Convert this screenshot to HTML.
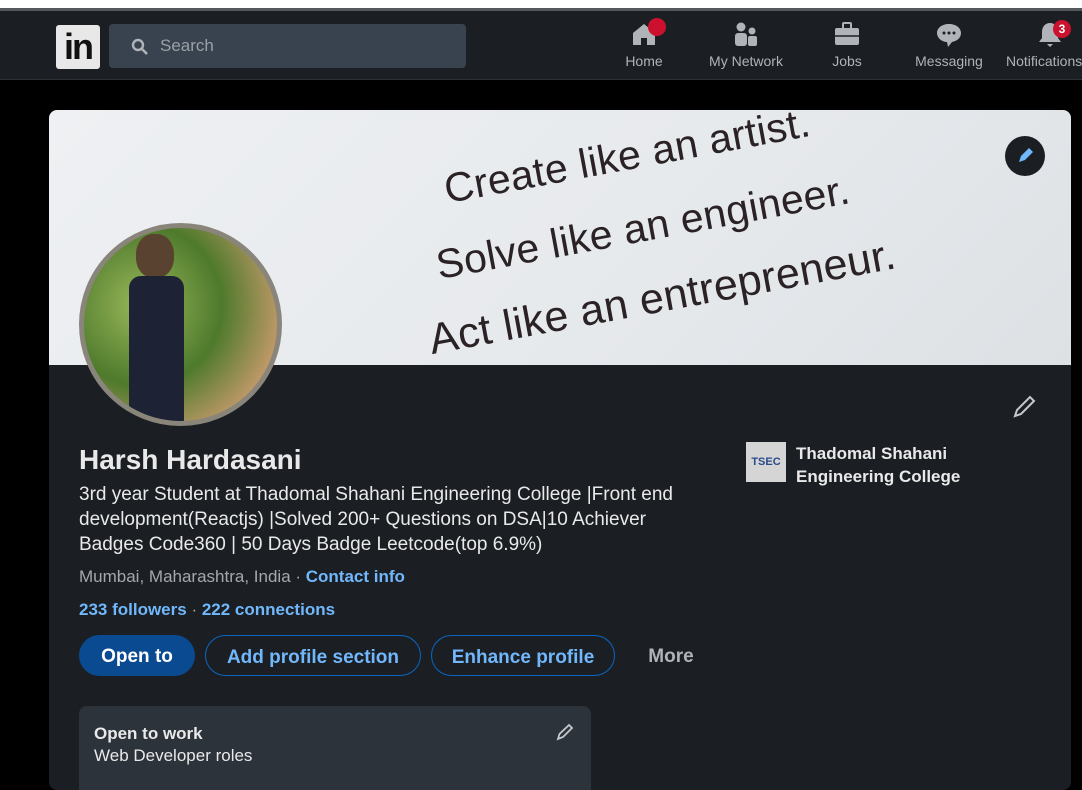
<!DOCTYPE html>
<html><head><meta charset="utf-8"><style>
*{margin:0;padding:0;box-sizing:border-box}
body{width:1082px;height:766px;overflow:hidden;background:#000;font-family:"Liberation Sans",sans-serif;position:relative}
.top{position:absolute;left:0;top:0;width:1082px;height:8px;background:#fff}
.nav{position:absolute;left:0;top:8px;width:1082px;height:72px;background:#1b1f23;border-top:3px solid #55585c;border-bottom:1px solid #2e3236}
.logo{position:absolute;left:56px;top:14px;width:44px;height:44px;background:#e8e8e8;border-radius:3px;color:#111;font-weight:bold;font-size:36px;line-height:44px;text-align:center;letter-spacing:-2px}
.search{position:absolute;left:109px;top:13px;width:357px;height:44px;background:#38434f;border-radius:4px;color:#9aa0a6;font-size:17px;line-height:44px;padding-left:51px}
.ni{position:absolute;top:9px;text-align:center;color:#b0b3b8;font-size:14px}
.ni svg{display:block;margin:0 auto 5px}
.badge{position:absolute;background:#cb112d;color:#fff;border-radius:50%;font-size:12px;font-weight:bold;width:18px;height:18px;line-height:18px;text-align:center}
.card{position:absolute;left:49px;top:110px;width:1022px;height:680px;background:#1b1f23;border-radius:8px;overflow:hidden}
.banner{position:absolute;left:0;top:0;width:1022px;height:255px;background:linear-gradient(135deg,#eef0f3,#e6e9ec 60%,#dde1e4)}
.q{position:absolute;color:#2a2224;font-size:41px;transform:rotate(-10.5deg);transform-origin:left bottom;white-space:nowrap;letter-spacing:.3px}
.av{position:absolute;left:30px;top:113px;width:203px;height:203px;border-radius:50%;border:5px solid #8a857a;overflow:hidden;background:radial-gradient(circle at 30% 40%,#9ab85a,#4e7a2c 45%,#c49a6a 80%)}
.t{position:absolute;color:#e9e9e9;white-space:nowrap}
.b{color:#71b7fb}
.btn{position:absolute;top:525px;height:41px;border-radius:21px;font-size:19px;font-weight:bold;line-height:43px;text-align:center}
</style></head><body>
<div class="top"></div>
<div class="nav">
 <div class="logo">in</div>
 <div class="search"><svg style="position:absolute;left:22px;top:14px" width="18" height="18" viewBox="0 0 18 18"><circle cx="7" cy="7" r="5" fill="none" stroke="#b0b3b8" stroke-width="2.4"/><path d="M11 11l5 5" stroke="#b0b3b8" stroke-width="2.6"/></svg>Search</div>
 <div class="ni" style="left:622px;width:44px"><svg width="28" height="28" viewBox="0 0 28 28"><path d="M3 13L14 4l11 9v12h-8v-7h-6v7H3z" fill="#b0b3b8"/></svg>Home<div class="badge" style="left:26px;top:-2px"></div></div>
 <div class="ni" style="left:703px;width:86px"><svg width="28" height="28" viewBox="0 0 28 28"><circle cx="9" cy="7" r="4.5" fill="#b0b3b8"/><circle cx="20" cy="11" r="3.5" fill="#b0b3b8"/><rect x="3" y="13" width="12" height="13" rx="3" fill="#b0b3b8"/><rect x="16" y="16" width="9" height="10" rx="2" fill="#b0b3b8"/></svg>My Network</div>
 <div class="ni" style="left:828px;width:38px"><svg width="28" height="28" viewBox="0 0 28 28"><rect x="2" y="8" width="24" height="17" rx="2" fill="#b0b3b8"/><rect x="10" y="3" width="8" height="6" rx="1" fill="none" stroke="#b0b3b8" stroke-width="2"/><path d="M2 16h24" stroke="#1b1f23" stroke-width="1.5"/></svg>Jobs</div>
 <div class="ni" style="left:911px;width:76px"><svg width="28" height="28" viewBox="0 0 28 28"><path d="M14 4C7 4 2 8 2 13s5 9 10 9l1 5 4-5c5-1 9-4 9-9 0-5-5-9-12-9z" fill="#b0b3b8"/><circle cx="9" cy="13" r="1.5" fill="#1b1f23"/><circle cx="14" cy="13" r="1.5" fill="#1b1f23"/><circle cx="19" cy="13" r="1.5" fill="#1b1f23"/></svg>Messaging</div>
 <div class="ni" style="left:1006px;width:90px;text-align:left"><svg style="margin:0 0 5px 30px" width="28" height="28" viewBox="0 0 28 28"><path d="M14 3c-5 0-8 4-8 9v6l-3 4h22l-3-4v-6c0-5-3-9-8-9zM11 24h6l-3 3z" fill="#b0b3b8"/></svg>Notifications<div class="badge" style="left:47px;top:0">3</div></div>
</div>
<div class="card">
 <div class="banner">
  <div class="q" style="left:400px;top:56px">Create like an artist.</div>
  <div class="q" style="left:392px;top:132px">Solve like an engineer.</div>
  <div class="q" style="left:385px;top:206px;font-size:43px">Act like an entrepreneur.</div>
  <div style="position:absolute;left:956px;top:26px;width:40px;height:40px;border-radius:50%;background:#1b1f23"><svg width="40" height="40" viewBox="0 0 40 40"><path d="M14 26l2-6 8-8 4 4-8 8z" fill="#71b7fb"/></svg></div>
 </div>
 <div class="av"><div style="position:absolute;left:52px;top:6px;width:38px;height:44px;border-radius:45%;background:#5a4230"></div><div style="position:absolute;left:45px;top:48px;width:55px;height:150px;background:#1d2234;border-radius:12px 12px 0 0"></div></div>
 <svg style="position:absolute;left:962px;top:282px" width="28" height="28" viewBox="0 0 28 28"><path d="M4 24l2-6L19 5l4 4L10 22z" fill="none" stroke="#c6c8ca" stroke-width="2"/></svg>
 <div class="t" style="left:30px;top:334px;font-size:28px;font-weight:bold">Harsh Hardasani</div>
 <div class="t" style="left:30px;top:372px;font-size:19px;line-height:25px;white-space:normal;width:630px">3rd year Student at Thadomal Shahani Engineering College |Front end development(Reactjs) |Solved 200+ Questions on DSA|10 Achiever Badges Code360 | 50 Days Badge Leetcode(top 6.9%)</div>
 <div class="t" style="left:30px;top:457px;font-size:17px;color:#a5a8ab">Mumbai, Maharashtra, India · <b class="b">Contact info</b></div>
 <div class="t b" style="left:30px;top:490px;font-size:17px;font-weight:bold">233 followers <span style="color:#a5a8ab;font-weight:normal">·</span> 222 connections</div>
 <div class="btn" style="left:30px;width:116px;background:#0a4a90;color:#fff">Open to</div>
 <div class="btn" style="left:156px;width:216px;border:1px solid #0a66c2;color:#71b7fb">Add profile section</div>
 <div class="btn" style="left:382px;width:184px;border:1px solid #0a66c2;color:#71b7fb">Enhance profile</div>
 <div class="btn" style="left:582px;width:80px;color:#b0b3b8">More</div>
 <div style="position:absolute;left:30px;top:596px;width:512px;height:120px;background:#2d333b;border-radius:8px">
  <div class="t" style="left:15px;top:18px;font-size:17px;font-weight:bold">Open to work</div>
  <div class="t" style="left:15px;top:40px;font-size:17px">Web Developer roles</div>
  <svg style="position:absolute;left:476px;top:16px" width="20" height="20" viewBox="0 0 20 20"><path d="M3 17l1.5-5L14 3l3 3-9 9z" fill="none" stroke="#c6c8ca" stroke-width="1.8"/></svg>
 </div>
 <div style="position:absolute;left:697px;top:332px;width:40px;height:40px;background:#d5d5d5;color:#2a4a8a;font-size:11px;font-weight:bold;text-align:center;line-height:40px">TSEC</div>
 <div class="t" style="left:747px;top:332px;font-size:17px;font-weight:bold;line-height:23px">Thadomal Shahani<br>Engineering College</div>
</div>
</body></html>
